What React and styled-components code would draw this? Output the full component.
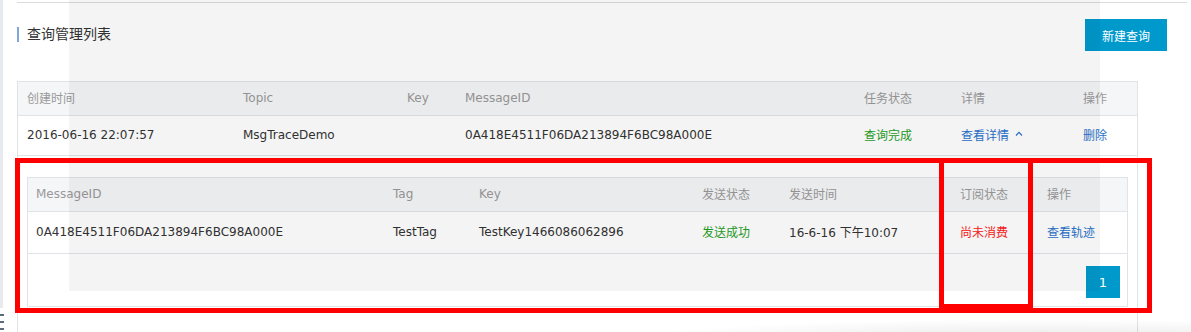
import React from 'react';
import styled, { createGlobalStyle } from 'styled-components';

const Global = createGlobalStyle`
  html, body { margin: 0; padding: 0; background: #fff; }
  body {
    font-family: "DejaVu Sans", "Noto Sans CJK SC", sans-serif;
    font-size: 12px;
    color: #333;
  }
  * { box-sizing: border-box; }
`;

const Page = styled.div`
  position: relative;
  width: 1191px;
  height: 332px;
  overflow: hidden;
  background: #fff;
  display: flex;
  align-items: flex-start;
`;

const SideEdge = styled.div`
  position: relative;
  width: 3px;
  height: 332px;
  background: linear-gradient(#e7ebef 0, #e7ebef 308px, #fff 308px);
  flex: none;
`;

const Dash = styled.span`
  position: absolute;
  left: 0;
  top: ${p => p.$top}px;
  width: 4px;
  height: 2px;
  background: #5d6b7a;
`;

const Main = styled.div`
  margin: 2px 0 0 14px;
  width: 1170px;
  border-top: 1px solid #dcdcdc;
  flex: none;
`;

const Header = styled.div`
  display: flex;
  justify-content: space-between;
  align-items: center;
  padding: 16px 20px 0 0;
  height: 48px;
`;

const Title = styled.h2`
  margin: -2px 0 0;
  border-left: 2px solid #7ea8d8;
  padding-left: 8px;
  font-size: 14px;
  line-height: 15px;
  font-weight: normal;
  color: #333;
`;

const PrimaryButton = styled.button`
  width: 82px;
  height: 32px;
  border: none;
  background: #0099cc;
  color: #fff;
  font-family: inherit;
  font-size: 12px;
  padding: 0;
`;

const Table = styled.div`
  margin-top: 30px;
  width: 1121px;
  border: 1px solid #e0e3e7;
  border-bottom: none;
  background: #fff;
`;

const InnerTable = styled.div`
  border: 1px solid #e0e3e7;
  background: #fff;
`;

const GridRow = styled.div`
  display: grid;
  grid-template-columns: ${p => p.$cols};
  height: ${p => p.$h}px;
  align-items: center;
  border-bottom: 1px solid #e0e3e7;
  background: ${p => (p.$head ? '#f5f6f8' : '#fff')};
  color: ${p => (p.$head ? '#999' : '#333')};
  white-space: nowrap;
`;

const Cell = styled.div`
  padding-left: ${p => p.$pad}px;
  padding-bottom: 2px;
  color: ${p => p.$color || 'inherit'};
  display: flex;
  align-items: center;
`;

const Expand = styled.div`
  padding: 21px 9px 30px;
`;

const Pager = styled.div`
  display: flex;
  justify-content: flex-end;
  padding: 12px 7px 8px;
`;

const PageBtn = styled.button`
  width: 34px;
  height: 32px;
  border: none;
  background: #0099cc;
  color: #fff;
  font-family: inherit;
  font-size: 13px;
  padding: 0;
`;

const Chevron = styled.svg`
  margin-left: 6px;
  margin-top: -2px;
`;

const Veil = styled.div`
  position: absolute;
  left: 69px;
  top: 0;
  width: 1031px;
  height: 291px;
  background: rgba(0, 0, 0, 0.043);
  pointer-events: none;
`;

const Mark = styled.div`
  position: absolute;
  left: ${p => p.$x}px;
  top: ${p => p.$y}px;
  width: ${p => p.$w}px;
  height: ${p => p.$h}px;
  border: 5px solid #ff0000;
  pointer-events: none;
`;

const Shade = styled.div`
  position: absolute;
  left: 600px;
  right: 0;
  top: 300px;
  bottom: 0;
  background: radial-gradient(ellipse 70% 60% at 75% 120%, rgba(0,0,0,0.09), rgba(0,0,0,0) 100%);
  pointer-events: none;
`;

const GREEN = '#1f9f1f';
const BLUE = '#2b72cb';
const RED = '#ff2020';

const outerCols = '216px 164px 58px 399px 97px 122px 1fr';
const innerCols = '357px 86px 223px 87px 171px 87px 1fr';

export default function App() {
  return (
    <>
      <Global />
      <Page>
        <SideEdge>
          <Dash $top={314} />
          <Dash $top={321} />
          <Dash $top={328} />
        </SideEdge>
        <Main>
          <Header>
            <Title>查询管理列表</Title>
            <PrimaryButton>新建查询</PrimaryButton>
          </Header>
          <Table>
            <GridRow $cols={outerCols} $h={34} $head>
              <Cell $pad={9}>创建时间</Cell>
              <Cell $pad={9}>Topic</Cell>
              <Cell $pad={9}>Key</Cell>
              <Cell $pad={9}>MessageID</Cell>
              <Cell $pad={9}>任务状态</Cell>
              <Cell $pad={9}>详情</Cell>
              <Cell $pad={9}>操作</Cell>
            </GridRow>
            <GridRow $cols={outerCols} $h={40}>
              <Cell $pad={9}>2016-06-16 22:07:57</Cell>
              <Cell $pad={9}>MsgTraceDemo</Cell>
              <Cell $pad={9}></Cell>
              <Cell $pad={9}>0A418E4511F06DA213894F6BC98A000E</Cell>
              <Cell $pad={9} $color={GREEN}>查询完成</Cell>
              <Cell $pad={9} $color={BLUE}>
                查看详情
                <Chevron width="8" height="5" viewBox="0 0 8 5">
                  <polyline points="1,4.5 4,1.3 7,4.5" fill="none" stroke="currentColor" strokeWidth="1.2" />
                </Chevron>
              </Cell>
              <Cell $pad={9} $color={BLUE}>删除</Cell>
            </GridRow>
            <Expand>
              <InnerTable>
                <GridRow $cols={innerCols} $h={34} $head>
                  <Cell $pad={8}>MessageID</Cell>
                  <Cell $pad={8}>Tag</Cell>
                  <Cell $pad={8}>Key</Cell>
                  <Cell $pad={8}>发送状态</Cell>
                  <Cell $pad={8}>发送时间</Cell>
                  <Cell $pad={8}>订阅状态</Cell>
                  <Cell $pad={8}>操作</Cell>
                </GridRow>
                <GridRow $cols={innerCols} $h={42}>
                  <Cell $pad={8}>0A418E4511F06DA213894F6BC98A000E</Cell>
                  <Cell $pad={8}>TestTag</Cell>
                  <Cell $pad={8}>TestKey1466086062896</Cell>
                  <Cell $pad={8} $color={GREEN}>发送成功</Cell>
                  <Cell $pad={8}>16-6-16 下午10:07</Cell>
                  <Cell $pad={8} $color={RED}>尚未消费</Cell>
                  <Cell $pad={8} $color={BLUE}>查看轨迹</Cell>
                </GridRow>
                <Pager>
                  <PageBtn>1</PageBtn>
                </Pager>
              </InnerTable>
            </Expand>
          </Table>
        </Main>
        <Veil />
        <Shade />
        <Mark $x={15} $y={158} $w={1137} $h={155} />
        <Mark $x={939} $y={158} $w={94} $h={151} />
      </Page>
    </>
  );
}
